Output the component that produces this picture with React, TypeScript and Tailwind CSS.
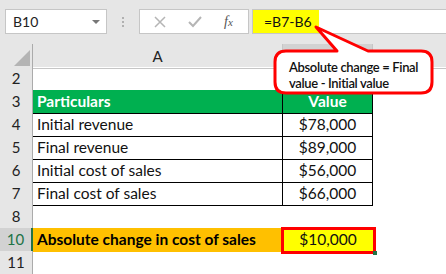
import React from 'react';

const font = { fontFamily: 'Lato, "Liberation Sans", sans-serif' };

type Row = { n: string; a?: string; b?: string; kind: 'blank' | 'head' | 'data' | 'top' | 'total'; sel?: boolean };

const rows: Row[] = [
  { n: '2', kind: 'top' },
  { n: '3', a: 'Particulars', b: 'Value', kind: 'head' },
  { n: '4', a: 'Initial revenue', b: '$78,000', kind: 'data' },
  { n: '5', a: 'Final revenue', b: '$89,000', kind: 'data' },
  { n: '6', a: 'Initial cost of sales', b: '$56,000', kind: 'data' },
  { n: '7', a: 'Final cost of sales', b: '$66,000', kind: 'data' },
  { n: '8', kind: 'blank' },
  { n: '10', a: 'Absolute change in cost of sales', b: '$10,000', kind: 'total', sel: true },
  { n: '11', kind: 'blank' },
];

function RowHead({ n, sel }: { n: string; sel?: boolean }) {
  return (
    <div
      className={
        sel
          ? 'flex items-center justify-center bg-[#d2d2d2] text-[#217346] border-b border-[#c6c6c6] border-r-2 border-r-[#217346] text-[15px]'
          : 'flex items-center justify-center bg-[#e6e6e6] text-[#222] border-b border-[#cfcfcf] border-r border-r-[#ababab] text-[15px]'
      }
    >
      {n}
    </div>
  );
}

function SheetRow({ r }: { r: Row }) {
  if (r.kind === 'blank' || r.kind === 'top') {
    const line = r.kind === 'top' ? 'border-b border-black' : '';
    return (
      <div className="grid grid-cols-[33px_250px_90px_1fr] h-[23px]">
        <RowHead n={r.n} />
        <div className={line} />
        <div className={line} />
        <div />
      </div>
    );
  }
  if (r.kind === 'total') {
    return (
      <div className="grid grid-cols-[33px_250px_90px_1fr] h-[23px]">
        <RowHead n={r.n} sel />
        <div className="bg-[#ffc000] flex items-center pl-[4px] font-bold text-[15.5px] text-black">{r.a}</div>
        <div className="relative bg-[#ffff00] flex items-center justify-center text-[15.5px] text-[#111]">
          {r.b}
          <div className="absolute -left-[2px] -top-[1px] -right-[3px] -bottom-[2px] border-[3px] border-[#ff0000]" />
          <div className="absolute -right-[4px] -bottom-[3px] w-[4px] h-[4px] bg-[#217346]" />
        </div>
        <div />
      </div>
    );
  }
  const head = r.kind === 'head';
  return (
    <div className="grid grid-cols-[33px_250px_90px_1fr] h-[23px]">
      <RowHead n={r.n} />
      <div
        className={
          'flex items-center pl-[4px] border-b border-r border-black text-[15.5px] ' +
          (head ? 'bg-[#00b050] text-white font-bold' : 'text-[#111]')
        }
      >
        {r.a}
      </div>
      <div
        className={
          'flex items-center justify-center border-b border-r border-black text-[15.5px] ' +
          (head ? 'bg-[#00b050] text-white font-bold' : 'text-[#111]')
        }
      >
        {r.b}
      </div>
      <div />
    </div>
  );
}

export default function App() {
  return (
    <div className="relative w-[446px] h-[274px] overflow-hidden bg-white" style={font}>
      {/* formula bar */}
      <div className="h-[44px] bg-[#e6e6e6] flex items-start pt-[9px] pl-[5px]">
        <div className="w-[102px] h-[25px] bg-white border border-[#c6c6c6] flex items-center justify-between pl-[7px] pr-[6px] text-[14px] text-[#222]">
          <span>B10</span>
          <span className="w-0 h-0 border-l-[4px] border-r-[4px] border-t-[4px] border-l-transparent border-r-transparent border-t-[#777]" />
        </div>
        <div className="w-[32px] h-[25px] flex flex-col items-center justify-center gap-[2px]">
          <span className="w-[2px] h-[2px] bg-[#b0b0b0]" />
          <span className="w-[2px] h-[2px] bg-[#b0b0b0]" />
          <span className="w-[2px] h-[2px] bg-[#b0b0b0]" />
        </div>
        <div className="w-[110px] h-[25px] bg-white border border-[#c6c6c6] flex items-center pl-[13px]">
          <svg width="12" height="12" viewBox="0 0 12 12" className="ml-[1px]">
            <path d="M1 1 L11 11 M11 1 L1 11" stroke="#b5b5b5" strokeWidth="1.5" />
          </svg>
          <svg width="14" height="12" viewBox="0 0 14 12" className="ml-[22px]">
            <path d="M1 6 L5 10 L13 1" stroke="#b5b5b5" strokeWidth="2" fill="none" />
          </svg>
          <span className="ml-[22px] text-[14px] italic text-[#555]" style={{ fontFamily: '"Liberation Serif", serif' }}>
            f<span className="text-[11px]">x</span>
          </span>
        </div>
        <div className="flex-1 h-[25px] ml-[3px] bg-white border-y border-l border-[#c6c6c6] flex items-stretch">
          <div className="w-[66px] bg-[#ffff00] flex items-center pl-[11px] text-[14px] text-[#111]">=B7-B6</div>
        </div>
      </div>

      {/* column headers */}
      <div className="grid grid-cols-[33px_250px_90px_1fr] h-[23px] bg-[#e6e6e6]">
        <div className="border-r border-b border-[#ababab] flex items-end justify-end pr-[2px] pb-[2px]">
          <svg width="16" height="16" viewBox="0 0 16 16">
            <polygon points="16,0 16,16 0,16" fill="#b4b4b4" />
          </svg>
        </div>
        <div className="flex items-center justify-center border-r border-b border-[#c6c6c6] text-[15px] text-[#222]">A</div>
        <div className="flex items-center justify-center bg-[#d2d2d2] border-r border-[#c6c6c6] border-b-2 border-b-[#217346] text-[15px] text-[#217346]">B</div>
        <div className="flex items-center justify-center border-b border-[#c6c6c6] text-[15px] text-[#222] pr-[28px]">C</div>
      </div>

      {rows.map((r) => (
        <SheetRow key={r.n} r={r} />
      ))}

      {/* callout */}
      <svg className="absolute left-0 top-0" width="446" height="274">
        <path
          d="M286 51 L337 51 L316 27 L368 51 L421 51 Q432 51 432 62 L432 82 Q432 93 421 93 L286 93 Q275 93 275 82 L275 62 Q275 51 286 51 Z"
          fill="white"
          stroke="#ff0000"
          strokeWidth="3"
          strokeLinejoin="round"
        />
      </svg>
      <div className="absolute left-[289px] top-[59px] text-[13px] leading-[16px] tracking-[-0.35px] font-semibold text-[#111]">
        <div>Absolute change = Final</div>
        <div>value - Initial value</div>
      </div>
    </div>
  );
}
